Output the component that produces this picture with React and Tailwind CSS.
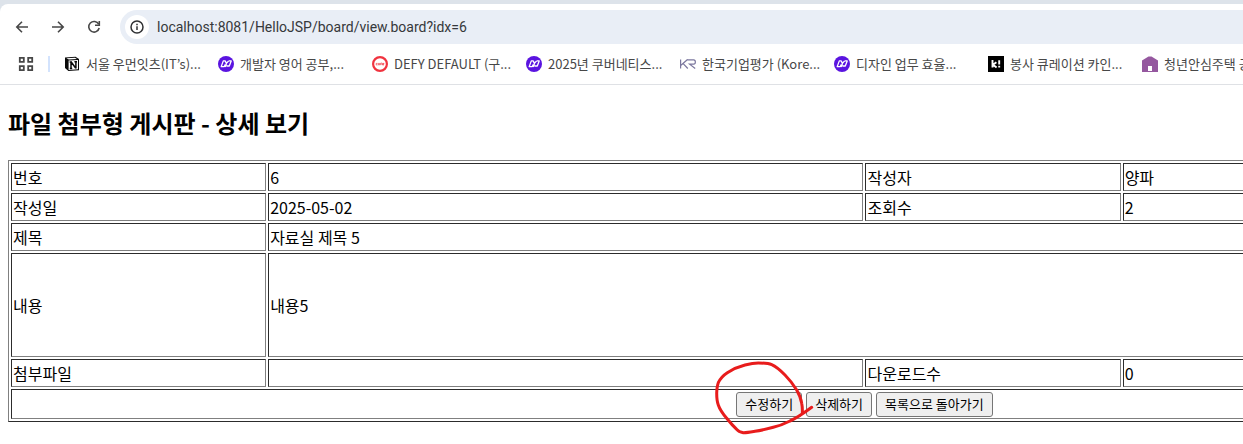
import React from "react";

const PurpleMark = () => (
  <svg className="size-4 shrink-0" viewBox="0 0 16 16" aria-hidden="true">
    <circle cx="8" cy="8" r="8" fill="#5a14e0" />
    <path d="M7.4 4.900H5.300L3.200 10.600H6.300L7.200 8.400M7.200 4.900 8.400 7.400 10.600 4.900M8.500 7.400 7.100 11M10.800 4.900H13.200L11.300 10H8.400" fill="none" stroke="#fff" strokeWidth="1.3" strokeLinejoin="round" />
  </svg>
);

const NotionMark = () => (
  <svg className="size-4 shrink-0" viewBox="0 0 16 16" aria-hidden="true">
    <path d="M1 1.6 11.5.8 15 3v11.2L4.4 15 1 12z" fill="#0a0a0a" />
    <path d="M2.4 2.3 11 1.7l1.8 1.2-8 .6z" fill="#fff" />
    <path d="M4.6 4.5 14 3.9v9.4l-9.4.7z" fill="#fff" />
    <path d="M5.600 6h2.400M10.400 5.700h2.600M5.800 12.400h2.400M7 6v6.400M7.200 6l4.600 6.200M11.900 5.800v6.600" fill="none" stroke="#0a0a0a" strokeWidth="1.5" />
  </svg>
);

const CafeMark = () => (
  <svg className="size-4 shrink-0" viewBox="0 0 16 16" aria-hidden="true">
    <circle cx="8" cy="8" r="6.9" fill="#fff" stroke="#f0333f" strokeWidth="2.2" />
    <path d="M5.6 7.4H4.2v1.5h1.4M6.4 7.4h1.2v1.5H6.4zM8.8 9.2V7h1M8.4 8h1.2M10.4 8.2h1.6v-.8h-1.6v1.5h1.6" fill="none" stroke="#f0333f" strokeWidth=".7" />
  </svg>
);

const KrMark = () => (
  <svg className="size-4 shrink-0" viewBox="0 0 16 16" aria-hidden="true">
    <path d="M.6 3.500v9M7.500 3.500 1 9.200M3.200 7.600l4.600 4.900M7.500 3.800h6.200c2.200 0 2.200 4.400 0 4.400H9.600l5.600 4.300" fill="none" stroke="#7b779e" strokeWidth="1.2" />
  </svg>
);

const KindMark = () => (
  <svg className="size-4 shrink-0" viewBox="0 0 16 16" aria-hidden="true">
    <path d="M0 0h16v16H0z" fill="#000" />
    <path d="M4.5 4v7.5M8.4 6.2 5 8.8l3.6 2.8M11.2 4.2v4.4M11.2 9.8v1.7" fill="none" stroke="#fff" strokeWidth="1.9" />
  </svg>
);

const HouseMark = () => (
  <svg className="size-4 shrink-0" viewBox="0 0 16 16" aria-hidden="true">
    <path d="M0 16V4.5L6.5.4h3L16 4.5V16z" fill="#95589f" />
    <path d="M6 10h4v5H6z" fill="#fff" />
  </svg>
);

const bookmarks = [
  [NotionMark, "서울 우먼잇츠(IT’s)..."],
  [PurpleMark, "개발자 영어 공부,..."],
  [CafeMark, "DEFY DEFAULT (구..."],
  [PurpleMark, "2025년 쿠버네티스..."],
  [KrMark, "한국기업평가 (Kore..."],
  [PurpleMark, "디자인 업무 효율..."],
  [KindMark, "봉사 큐레이션 카인..."],
  [HouseMark, "청년안심주택 공..."],
];

const NavButton = ({ label, children }) => (
  <button type="button" aria-label={label} className="flex size-5 items-center justify-center">
    <svg className="size-4" viewBox="0 0 16 16" fill="none" stroke="#474747" strokeWidth="1.6" aria-hidden="true">
      {children}
    </svg>
  </button>
);

const Cell = ({ className = "", ...props }) => (
  <td className={"border border-[gray] [border-style:inset] p-px " + className} {...props} />
);

const ActionButton = ({ children }) => (
  <button type="button" className="h-[25px] rounded-[3px] border border-[#767676] bg-[#efefef] px-2 text-[13px] leading-5">
    {children}
  </button>
);

const RedCircle = () => (
  <svg className="pointer-events-none absolute -left-[22px] -top-[33px] h-[77px] w-[102px] max-w-none" viewBox="-2 -2 102 77" aria-hidden="true">
    <path
      d="M95.7 46.3C88 52 81 57 74 60C68 63 63 65 57.3 66.3C51 68 45 69.5 39 70.3C35 71 31 71.8 27.3 71.7C24 71 22 70 20.7 68.3C17 65 14 61.500 10.7 57.3C7 53 4 49 2.3 44C.8 40 .7 36 .7 32.3C.8 28 1 25 2.3 21.7C4 18 7 14.500 11.3 11.7C17 8 23 5.500 29 4C33 3 38 2 42.3 2C47 2 52 2 55.7 3.7C61 6 65 10 69 14C73 18 77.500 24 80.7 29C83 33 85 37.500 85.7 42.3C86.400 46 86.500 50 86.3 53"
      fill="none"
      stroke="#e81c1c"
      strokeWidth="3"
      strokeLinecap="round"
      strokeLinejoin="round"
    />
  </svg>
);

export default function App() {
  return (
    <div className="min-h-screen overflow-hidden bg-white font-['Noto_Sans_CJK_KR',sans-serif] text-black">
      <header className="bg-[#dde3ea] pt-1">
        <div className="rounded-tl-lg border-b border-[#dfe1e5] bg-white pt-1.5">
          <div className="flex items-center pl-3">
            <nav aria-label="탐색" className="flex shrink-0 gap-4">
              <NavButton label="뒤로"><path d="M14 8H3M8 2.800 2.800 8 8 13.200" /></NavButton>
              <NavButton label="앞으로"><path d="M2 8h11M8 2.800 13.200 8 8 13.200" /></NavButton>
              <NavButton label="새로고침">
                <path d="M12.700 5.200A5.300 5.300 0 1 0 13.200 9" />
                <path d="M13.300 2v4.300H9" />
              </NavButton>
            </nav>
            <div className="ml-4 flex h-[34px] grow items-center gap-2 rounded-l-full bg-[#e9eef6] pl-[5px]">
              <button type="button" aria-label="사이트 정보 보기" className="flex size-6 shrink-0 items-center justify-center rounded-full bg-white">
                <svg className="size-4" viewBox="0 0 16 16" fill="none" stroke="#303134" strokeWidth="1.500" aria-hidden="true">
                  <circle cx="8" cy="8" r="6" />
                  <path d="M8 7.200V11M8 4.800v1.400" />
                </svg>
              </button>
              <input
                aria-label="주소"
                defaultValue="localhost:8081/HelloJSP/board/view.board?idx=6"
                className="min-w-0 grow bg-transparent font-[Roboto,'Noto_Sans',sans-serif] text-sm text-[#36383b] outline-none"
              />
            </div>
          </div>
          <nav aria-label="북마크" className="flex h-10 items-center overflow-hidden pl-[18px]">
            <button type="button" aria-label="모든 북마크" className="size-4 shrink-0">
              <svg className="size-4" viewBox="0 0 16 16" fill="none" stroke="#474747" strokeWidth="1.800" aria-hidden="true">
                <path d="M1.800 1.800h4v4h-4zM10.200 1.800h4v4h-4zM1.800 10.200h4v4h-4zM10.200 10.200h4v4h-4z" />
              </svg>
            </button>
            <span className="ml-3.5 mr-3.5 h-4 w-0.5 shrink-0 bg-[#d3e3fd]" />
            {bookmarks.map(([Icon, label]) => (
              <a key={label} href="#" className="flex w-[154px] shrink-0 items-center gap-1.5 whitespace-nowrap text-[13px] leading-4 text-[#474747]">
                <Icon />
                {label}
              </a>
            ))}
          </nav>
        </div>
      </header>
      <main className="p-2">
        <h2 className="mb-[19px] mt-3 text-2xl font-bold leading-9">파일 첨부형 게시판 - 상세 보기</h2>
        <table className="w-[90%] min-w-[1713px] table-fixed border-separate border-spacing-[2px] border border-[gray] text-base [border-style:outset]">
          <colgroup>
            <col className="w-[15%]" />
            <col className="w-[35%]" />
            <col className="w-[15%]" />
            <col />
          </colgroup>
          <tbody>
            <tr><Cell>번호</Cell><Cell>6</Cell><Cell>작성자</Cell><Cell>양파</Cell></tr>
            <tr><Cell>작성일</Cell><Cell>2025-05-02</Cell><Cell>조회수</Cell><Cell>2</Cell></tr>
            <tr><Cell>제목</Cell><Cell colSpan={3}>자료실 제목 5</Cell></tr>
            <tr><Cell className="h-[104px]">내용</Cell><Cell colSpan={3}>내용5</Cell></tr>
            <tr><Cell>첨부파일</Cell><Cell /><Cell>다운로드수</Cell><Cell>0</Cell></tr>
            <tr>
              <Cell colSpan={4}>
                <div className="flex h-[26px] items-center justify-center gap-1">
                  <div className="relative flex">
                    <ActionButton>수정하기</ActionButton>
                    <RedCircle />
                  </div>
                  <ActionButton>삭제하기</ActionButton>
                  <ActionButton>목록으로 돌아가기</ActionButton>
                </div>
              </Cell>
            </tr>
          </tbody>
        </table>
      </main>
    </div>
  );
}
